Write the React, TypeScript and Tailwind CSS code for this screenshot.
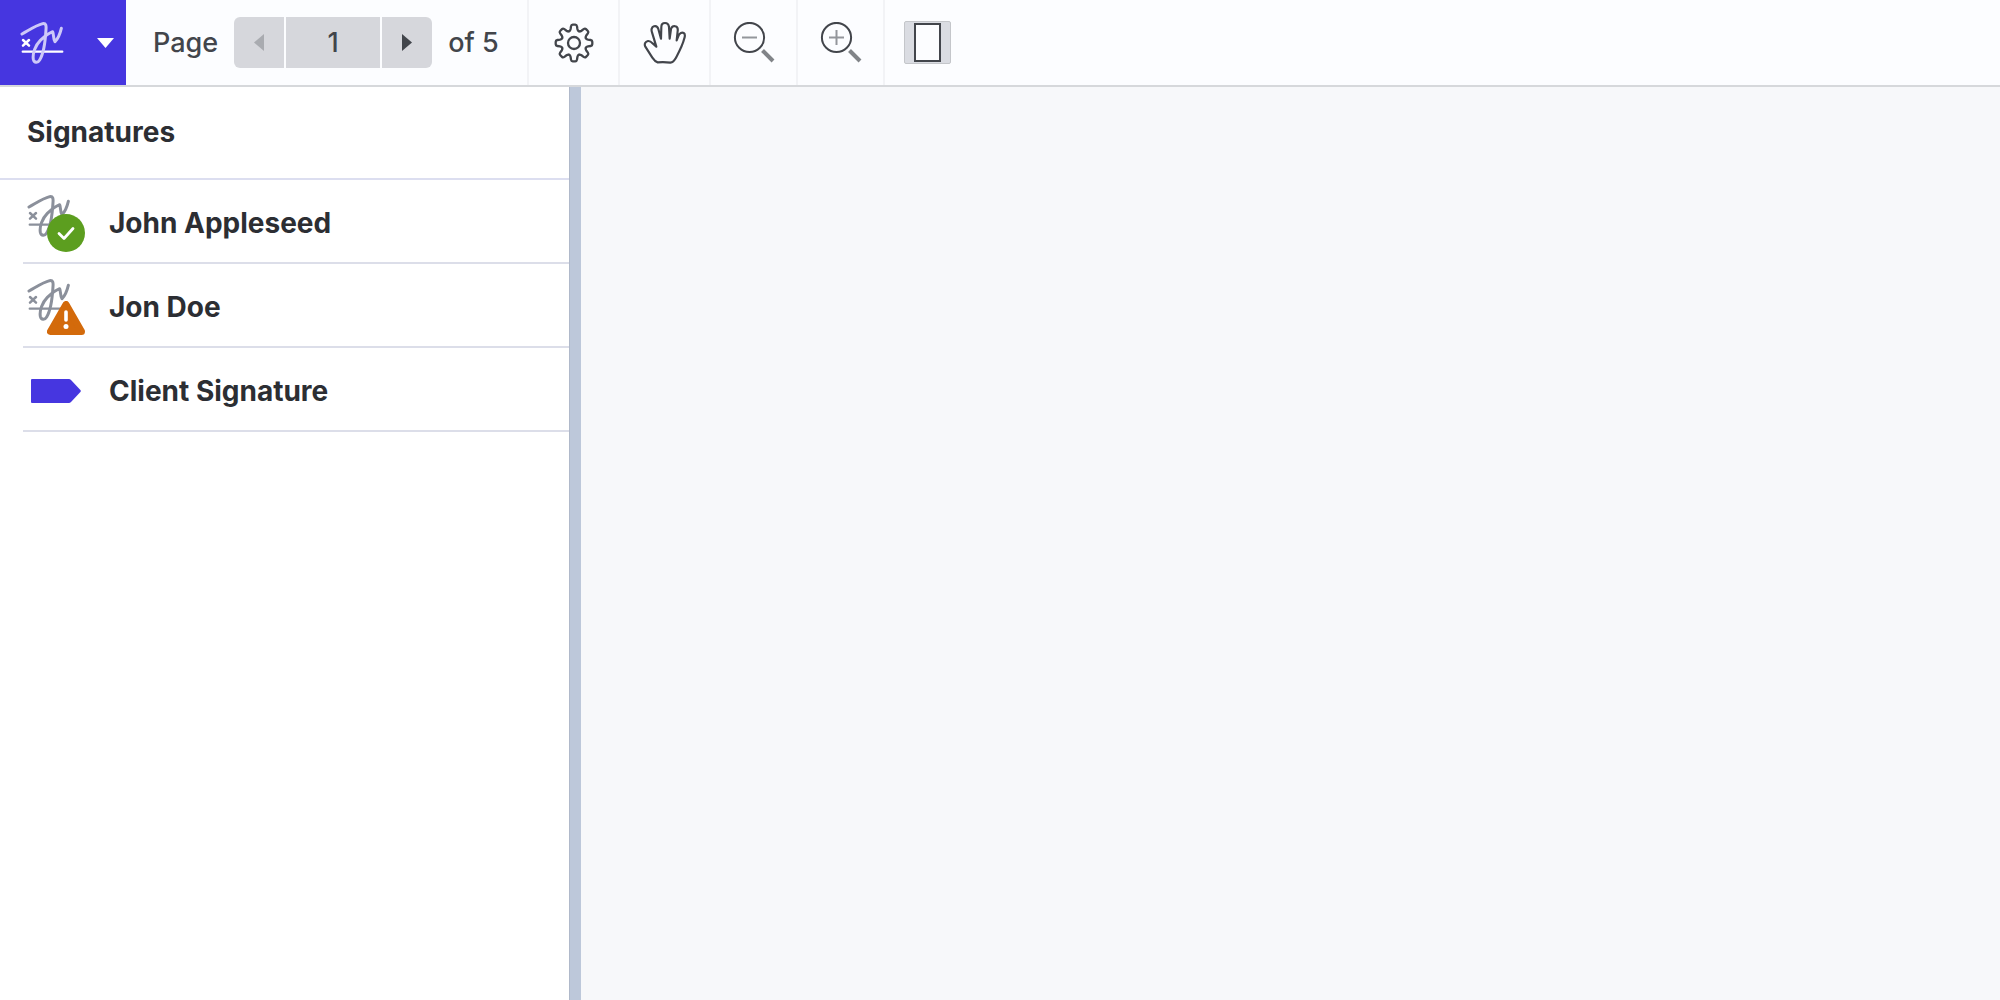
import type { ReactNode } from "react";

type Status = "valid" | "warning" | "pending";

interface Signer {
  name: string;
  status: Status;
}

const signers: Signer[] = [
  { name: "John Appleseed", status: "valid" },
  { name: "Jon Doe", status: "warning" },
  { name: "Client Signature", status: "pending" },
];

const SignatureIcon = ({ scribble, mark }: { scribble: string; mark: string }) => (
  <svg viewBox="60 62 135 135" className="h-[45px] w-[45px]" fill="none" strokeLinecap="round" strokeLinejoin="round" aria-hidden="true">
    <g className={mark}>
      <path strokeWidth="7.5" d="M69 122l18 17M87 122l-18 17" />
      <path strokeWidth="6.5" d="M68 157h119" />
    </g>
    <path
      className={scribble}
      strokeWidth="9"
      d="M66 104C88 92 108 78 128 73C138 71 139 79 138 90C136 126 130 164 119 182C113 192 103 191 100 180C97 163 106 138 121 123C134 111 148 101 158 97C161 102 159 117 165 127C172 120 180 104 184 87"
    />
  </svg>
);

const GearIcon = () => (
  <svg viewBox="-20 -20 40 40" className="h-10 w-10" fill="none" stroke="currentColor" strokeWidth="2.3" strokeLinecap="round" aria-hidden="true">
    <circle r="6" />
    {[0, 45, 90, 135, 180, 225, 270, 315].map((angle) => (
      <path
        key={angle}
        transform={`rotate(${angle})`}
        d="M-4.9-11.8C-3.9-12.2-3.6-13-3.4-14L-3-16.6Q-2.7-18.3-1.3-18.3H1.3Q2.7-18.3 3-16.6L3.4-14C3.6-13 3.9-12.2 4.9-11.8"
      />
    ))}
  </svg>
);

const HandIcon = () => (
  <svg viewBox="366 62 132 129" className="h-[43px] w-11" fill="none" stroke="currentColor" strokeWidth="6.5" strokeLinejoin="round" aria-hidden="true">
    <path d="M410 186C402 184 398 178 394 172L373 139C369 131 373 124 381 122C387 121 391 125 396 130L406 139L393 96C390 88 392 80 399 78C406 76 410 80 412 86L420 115L421 80C421 72 425 68 432 68C439 68 443 72 444 80L446 115L450 86C452 79 457 76 463 78C470 80 471 86 470 92L467 120L473 105C476 98 483 95 488 98C493 101 492 108 490 114C485 135 474 155 465 172C460 181 455 186 448 187Q430 184 410 186Z" />
  </svg>
);

const ZoomIcon = ({ plus = false }: { plus?: boolean }) => (
  <svg viewBox="0 0 42 42" className="h-[42px] w-[42px]" fill="none" aria-hidden="true">
    <circle cx="16.5" cy="15.5" r="14.6" stroke="#42454b" strokeWidth="2" />
    <path d={plus ? "M9 15.5h15M16.5 8v15" : "M9 15.5h15"} stroke="#93969b" strokeWidth="2" />
    <path d="M29.5 28.5l10.5 10.5" stroke="#818488" strokeWidth="4" />
  </svg>
);

const FitPageIcon = () => (
  <svg viewBox="0 0 47 43" className="h-[43px] w-[47px]" aria-hidden="true">
    <rect x="0.5" y="0.5" width="46" height="42" rx="1.5" fill="#dadce2" stroke="#c4c6ca" />
    <rect x="11" y="3" width="25" height="37" fill="#fcfdff" stroke="#42454b" strokeWidth="2" />
  </svg>
);

const ValidBadge = () => (
  <svg viewBox="0 0 38 38" className="absolute top-[21px] left-5 h-[38px] w-[38px]" fill="none" role="img" aria-label="Valid">
    <circle cx="19" cy="19" r="19" fill="#5c9e1f" />
    <path d="M12 19.5l5 5l9-10" stroke="#fff" strokeWidth="2.8" strokeLinecap="round" strokeLinejoin="round" />
  </svg>
);

const WarningBadge = () => (
  <svg viewBox="0 0 38 34" className="absolute top-6 left-5 h-[34px] w-[38px]" role="img" aria-label="Warning">
    <path d="M19 3.5L3.5 30.5h31z" fill="#d36a0b" stroke="#d36a0b" strokeWidth="7" strokeLinejoin="round" />
    <path d="M19 11v8" stroke="#fff" strokeWidth="3.6" strokeLinecap="round" />
    <circle cx="19" cy="25.5" r="2.5" fill="#fff" />
  </svg>
);

const TagIcon = () => (
  <svg viewBox="0 0 50 24" className="ml-1 h-6 w-[50px]" fill="#4636e0" aria-hidden="true">
    <path d="M1 0h37q1 0 2 1l9.4 10q.8 1 0 2l-9.4 10q-1 1-2 1H1q-1 0-1-1V1q0-1 1-1z" />
  </svg>
);

const ToolButton = ({ label, className, children }: { label: string; className: string; children: ReactNode }) => (
  <button type="button" aria-label={label} className={`flex h-full shrink-0 items-center justify-center border-l-2 border-[#f2f3f6] ${className}`}>
    {children}
  </button>
);

const Toolbar = () => (
  <header className="flex h-[87px] w-full items-center border-b-2 border-[#d6d8db] bg-[#fcfdff] text-[27px] leading-8 font-medium text-[#42454b]">
    <button type="button" aria-label="Signatures menu" className="flex h-full w-[126px] shrink-0 items-center justify-between bg-[#4636e0] pr-3 pl-5">
      <SignatureIcon scribble="stroke-[#cdc8f8]" mark="stroke-white" />
      <svg viewBox="0 0 17 10" className="h-[10px] w-[17px]" fill="#fff" aria-hidden="true">
        <path d="M0 0h17L8.5 10z" />
      </svg>
    </button>

    <div className="flex w-[401px] shrink-0 items-center pl-[27px]">
      <label htmlFor="page">Page</label>
      <div className="mx-4 flex gap-[2px]">
        <button type="button" disabled aria-label="Previous page" className="flex h-[51px] w-[50px] items-center justify-center rounded-l-md bg-[#d6d7dc] text-[#a9abb0]">
          <svg viewBox="0 0 10 17" className="h-[17px] w-[10px]" fill="currentColor" aria-hidden="true">
            <path d="M10 0v17L0 8.5z" />
          </svg>
        </button>
        <input id="page" defaultValue="1" className="h-[51px] w-[94px] bg-[#d6d7dc] text-center outline-none" />
        <button type="button" aria-label="Next page" className="flex h-[51px] w-[50px] items-center justify-center rounded-r-md bg-[#d6d7dc]">
          <svg viewBox="0 0 10 17" className="h-[17px] w-[10px]" fill="currentColor" aria-hidden="true">
            <path d="M0 0v17l10-8.5z" />
          </svg>
        </button>
      </div>
      <span>of 5</span>
    </div>

    <ToolButton label="Settings" className="w-[91px]">
      <GearIcon />
    </ToolButton>
    <ToolButton label="Pan" className="w-[91px]">
      <HandIcon />
    </ToolButton>
    <ToolButton label="Zoom out" className="w-[87px]">
      <ZoomIcon />
    </ToolButton>
    <ToolButton label="Zoom in" className="w-[87px]">
      <ZoomIcon plus />
    </ToolButton>
    <ToolButton label="Fit page" className="w-[87px]">
      <FitPageIcon />
    </ToolButton>
  </header>
);

const SignerRow = ({ signer }: { signer: Signer }) => (
  <li className="flex h-[84px] items-center gap-6 border-b-2 border-[#dcdee9] pt-1 pl-1">
    <div className="relative h-[60px] w-[58px] shrink-0">
      {signer.status === "pending" ? (
        <div className="flex h-full items-center">
          <TagIcon />
        </div>
      ) : (
        <SignatureIcon scribble="stroke-[#8b909b]" mark="stroke-[#8b909b]" />
      )}
      {signer.status === "valid" && <ValidBadge />}
      {signer.status === "warning" && <WarningBadge />}
    </div>
    <span>{signer.name}</span>
  </li>
);

const App = () => {
  return (
    <div className="flex min-h-screen flex-col font-['Inter',sans-serif]">
      <Toolbar />
      <div className="flex grow">
        <aside className="w-[569px] shrink-0 bg-white text-[28px] leading-8 font-bold text-[#2c2e33]">
          <h2 className="flex h-[93px] items-center border-b-2 border-[#dcdef0] pb-[2px] pl-[27px]">Signatures</h2>
          <ul className="pl-[23px]">
            {signers.map((signer) => (
              <SignerRow key={signer.name} signer={signer} />
            ))}
          </ul>
        </aside>
        <div className="w-3 shrink-0 border-l border-[#b0b9ca] bg-[#bdc8da]" />
        <main className="grow bg-[#f7f8fa]" />
      </div>
    </div>
  );
};

export default App;
